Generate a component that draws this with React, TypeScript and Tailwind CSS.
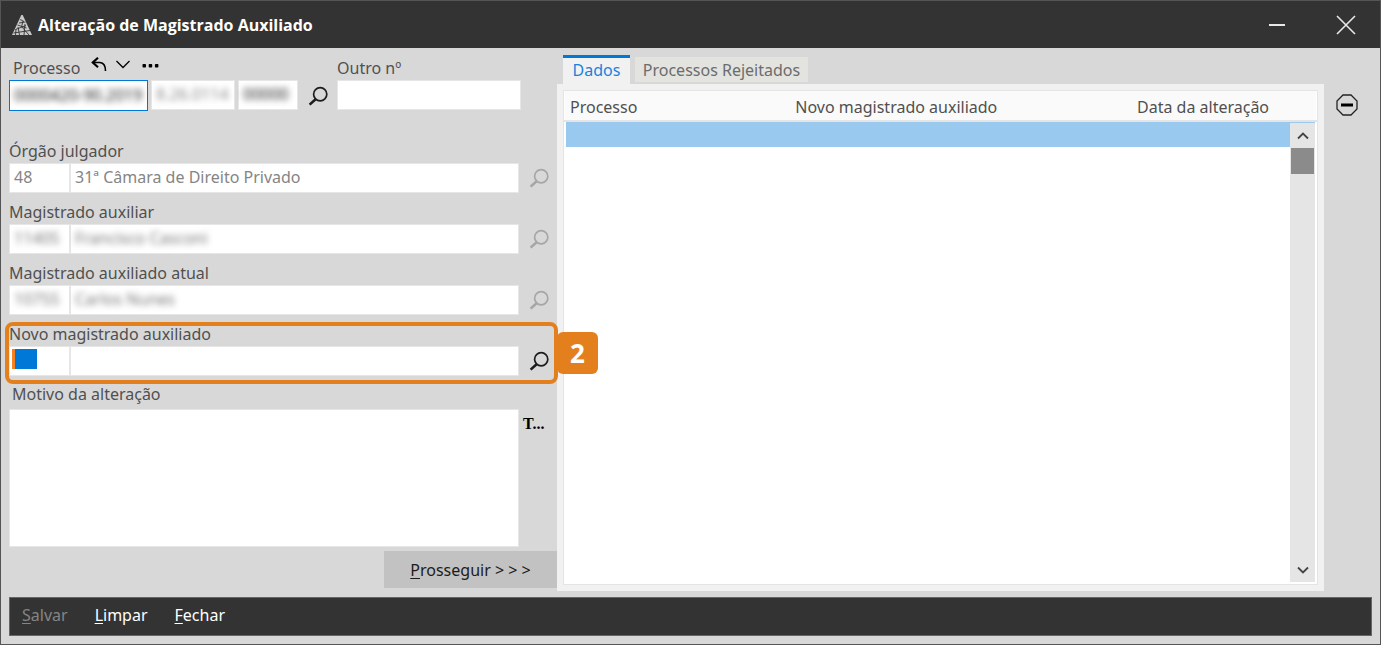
import type { ReactNode } from "react";

const fieldBox = "h-[30px] border border-[#e6e6e6] bg-white";
const fieldInput = "block h-full w-full bg-transparent px-1 pb-0.5 outline-none";

function SearchIcon() {
  return (
    <svg width="20" height="20" viewBox="0 0 20 20" fill="none" stroke="currentColor" aria-hidden="true">
      <circle cx="12.2" cy="8.3" r="6.6" strokeWidth="1.7" />
      <path d="M7.6 13.2 L1.6 18.6" strokeWidth="2.6" />
    </svg>
  );
}

function SearchButton({ label, disabled = false }: { label: string; disabled?: boolean }) {
  return (
    <button
      type="button"
      aria-label={label}
      disabled={disabled}
      className="flex h-[30px] w-[38px] items-center justify-center pl-0.5 text-[#1c1c1c] disabled:text-[#a6a6a6]"
    >
      <SearchIcon />
    </button>
  );
}

type LookupProps = {
  id: string;
  label: string;
  code?: string;
  name?: string;
  masked?: boolean;
  disabled?: boolean;
  children?: ReactNode;
};

function LookupField({ id, label, code = "", name = "", masked, disabled, children }: LookupProps) {
  const tone = masked ? "text-[#777777] blur-[3px]" : "text-[#858585]";
  return (
    <div className="relative">
      <label htmlFor={id} className="block h-5 leading-4">
        {label}
      </label>
      <div className="flex">
        <div className={`${fieldBox} w-[61px] shrink-0`}>
          <input id={id} defaultValue={code} readOnly={disabled} className={`${fieldInput} ${tone}`} />
        </div>
        <div className={`${fieldBox} min-w-0 flex-1`}>
          <input
            aria-label={`${label} - nome`}
            defaultValue={name}
            readOnly={disabled}
            className={`${fieldInput} ${tone}`}
          />
        </div>
        <SearchButton label={`Pesquisar ${label}`} disabled={disabled} />
      </div>
      {children}
    </div>
  );
}

function AppLogo() {
  return (
    <svg width="20" height="20" viewBox="0 0 20 20" aria-hidden="true">
      <path d="M9.3 0 L0 20 H20 L10.7 0 Z" fill="#c8c8c8" />
      <path
        d="M8 4.500 L12 6.500 M7 8 L13.500 7 M5.500 10 L14.500 13 M3.500 14.500 L14 10.500 M1.500 18 L18 15.500 M6 12 L7.500 20 M11 6 L9.500 12 M13 9 L12 20 M10 12 L17 20 M4 14 L3.500 20"
        stroke="#333333"
        strokeWidth="0.9"
        fill="none"
      />
    </svg>
  );
}

export default function App() {
  return (
    <div className="mr-px flex min-h-screen flex-col border border-[#555555] bg-[#d8d8d8] font-['Noto_Sans','Open_Sans',sans-serif] text-base text-[#505050]">
      <header className="flex h-[47px] items-center bg-[#333333] pl-[11px] text-white">
        <AppLogo />
        <h1 className="ml-1.5 flex-1 font-['Open_Sans',sans-serif] text-base font-bold">
          Alteração de Magistrado Auxiliado
        </h1>
        <button type="button" aria-label="Minimizar" className="flex h-full w-[69px] items-center justify-center">
          <svg width="16" height="20" viewBox="0 0 16 20" aria-hidden="true">
            <path d="M0 10 H16" stroke="#e8e8e8" strokeWidth="2" />
          </svg>
        </button>
        <button type="button" aria-label="Fechar janela" className="flex h-full w-[69px] items-center justify-center">
          <svg width="20" height="20" viewBox="0 0 20 20" aria-hidden="true">
            <path d="M1 1 L19 19 M19 1 L1 19" stroke="#e8e8e8" strokeWidth="1.6" />
          </svg>
        </button>
      </header>

      <main className="flex flex-1 flex-col px-2 pb-2">
        <div className="flex flex-1">
          <form className="flex w-[548px] shrink-0 flex-col pb-[9px]">
            <div className="flex">
              <div className="w-[289px]">
                <div className="flex h-8 items-center pl-1">
                  <label htmlFor="processo" className="pt-2">
                    Processo
                  </label>
                  <button type="button" aria-label="Desfazer" className="ml-[11px] text-black">
                    <svg width="16" height="15" viewBox="0 0 16 15" fill="none" stroke="currentColor" aria-hidden="true">
                      <path d="M1.500 5.500 H9 Q14.500 6 14.500 14" strokeWidth="1.6" />
                      <path d="M7 0.800 L1.800 5.500 L7 10.200" strokeWidth="2.2" />
                    </svg>
                  </button>
                  <button type="button" aria-label="Recentes" className="ml-[9px] text-black">
                    <svg width="14" height="9" viewBox="0 0 14 9" fill="none" stroke="currentColor" aria-hidden="true">
                      <path d="M0.500 1 L7 7.500 L13.500 1" strokeWidth="1.3" />
                    </svg>
                  </button>
                  <button type="button" aria-label="Mais opções" className="ml-3 pt-1 text-black">
                    <svg width="17" height="4" viewBox="0 0 17 4" fill="currentColor" aria-hidden="true">
                      <rect x="0.500" width="3.500" height="3.500" rx="0.800" />
                      <rect x="6.700" width="3.500" height="3.500" rx="0.800" />
                      <rect x="12.900" width="3.500" height="3.500" rx="0.800" />
                    </svg>
                  </button>
                </div>
                <div className="flex">
                  <div className="h-[31px] w-[139px] border border-[#0078d7] bg-white">
                    <input
                      id="processo"
                      defaultValue="0000420-90.2019"
                      className={`${fieldInput} text-[#222222] blur-[3px]`}
                    />
                  </div>
                  <div className={`${fieldBox} ml-[3px] w-[84px]`}>
                    <input
                      aria-label="Unidade"
                      defaultValue="8.26.0114"
                      readOnly
                      className={`${fieldInput} text-[#888888] blur-[3px]`}
                    />
                  </div>
                  <div className={`${fieldBox} ml-[3px] w-[60px]`}>
                    <input
                      aria-label="Complemento"
                      defaultValue="00000"
                      className={`${fieldInput} text-[#222222] blur-[3px]`}
                    />
                  </div>
                </div>
              </div>
              <div className="flex w-[39px] items-end">
                <SearchButton label="Pesquisar processo" />
              </div>
              <div className="w-[184px]">
                <label htmlFor="outro" className="flex h-8 items-center pt-2">
                  Outro nº
                </label>
                <div className={fieldBox}>
                  <input id="outro" className={fieldInput} />
                </div>
              </div>
            </div>

            <div className="mt-8 flex flex-col gap-[11px]">
              <LookupField id="orgao" label="Órgão julgador" code="48" name="31ª Câmara de Direito Privado" disabled />
              <LookupField id="auxiliar" label="Magistrado auxiliar" code="11405" name="Francisco Casconi" masked disabled />
              <LookupField id="atual" label="Magistrado auxiliado atual" code="10755" name="Carlos Nunes" masked disabled />
              <LookupField id="novo" label="Novo magistrado auxiliado">
                <span className="pointer-events-none absolute bottom-[7px] left-[3px] h-5 w-[25px] border-l-[3px] border-[#f58220] bg-[#0078d7]" />
                <span className="pointer-events-none absolute -top-1 -right-px -bottom-2 -left-1 rounded-lg border-4 border-[#e47f1d]" />
                <span className="absolute top-1.5 -right-[41px] z-10 flex h-[42px] w-[41px] items-center justify-center rounded-md bg-[#e47f1d] font-['Open_Sans',sans-serif] text-[26px] font-bold text-white">
                  2
                </span>
              </LookupField>
            </div>

            <label htmlFor="motivo" className="mt-[9px] mb-1 h-5 pl-[3px] leading-[18px]">
              Motivo da alteração
            </label>
            <div className="flex flex-1">
              <textarea
                id="motivo"
                className="min-h-[138px] w-[510px] resize-none border border-[#e6e6e6] bg-white px-1 outline-none"
              />
              <button
                type="button"
                aria-label="Textos padrão"
                className="h-[30px] self-start pl-1 font-['Liberation_Serif',serif] text-base font-bold text-black"
              >
                T...
              </button>
            </div>
            <button
              type="button"
              className="mt-1 h-[37px] w-[173px] self-end bg-[#c2c2c2] text-[#1c1c1c]"
            >
              <u className="underline-offset-2">P</u>rosseguir &gt; &gt; &gt;
            </button>
          </form>

          <section className="flex min-w-0 flex-1 flex-col pt-[7px] pb-1.5">
            <div role="tablist" className="flex h-[29px] items-start gap-[5px] pl-1.5">
              <button
                type="button"
                role="tab"
                aria-selected="true"
                className="h-[29px] w-[67px] border-t-[3px] border-[#0078d7] bg-[#f1f1f1] pb-1 text-[#1a82dc]"
              >
                Dados
              </button>
              <button
                type="button"
                role="tab"
                aria-selected="false"
                className="mt-0.5 h-[25px] w-[173px] bg-[#e3e3df] text-[#6c6c6c]"
              >
                Processos Rejeitados
              </button>
            </div>
            <div className="flex-1 bg-[#f1f1f1] p-1.5">
              <div className="relative h-full border border-[#e4e4e4] bg-white">
                <table className="w-full table-fixed border-collapse text-left">
                  <colgroup>
                    <col className="w-[30%]" />
                    <col className="w-[45.5%]" />
                    <col />
                  </colgroup>
                  <thead>
                    <tr className="h-[30px] border-b-2 border-[#e4e4e4] bg-[#fafafa]">
                      <th className="pt-0.5 pl-[5px] font-normal">Processo</th>
                      <th className="pt-0.5 pl-[5px] font-normal">Novo magistrado auxiliado</th>
                      <th className="pt-0.5 pl-[5px] font-normal">Data da alteração</th>
                    </tr>
                  </thead>
                  <tbody>
                    <tr className="h-[26px] border-x-2 border-white bg-[#99c9ef]">
                      <td />
                      <td />
                      <td />
                    </tr>
                  </tbody>
                </table>
                <div className="absolute top-8 right-0.5 bottom-0.5 flex w-[25px] flex-col items-center bg-[#e5e5e5]">
                  <button type="button" aria-label="Rolar para cima" className="flex h-[25px] items-center">
                    <svg width="12" height="8" viewBox="0 0 12 8" fill="none" stroke="#444444" aria-hidden="true">
                      <path d="M1 6.500 L6 1.500 L11 6.500" strokeWidth="1.8" />
                    </svg>
                  </button>
                  <div className="h-[26px] w-[23px] bg-[#8b8b8b]" />
                  <button type="button" aria-label="Rolar para baixo" className="mt-auto flex h-[25px] items-center">
                    <svg width="12" height="8" viewBox="0 0 12 8" fill="none" stroke="#444444" aria-hidden="true">
                      <path d="M1 1.500 L6 6.500 L11 1.500" strokeWidth="1.8" />
                    </svg>
                  </button>
                </div>
              </div>
            </div>
          </section>

          <aside className="w-12 pt-[46px] pl-3">
            <button type="button" aria-label="Remover" className="block">
              <svg width="22" height="22" viewBox="0 0 22 22" fill="none" stroke="#222222" aria-hidden="true">
                <path d="M7 1 H15 L21 7 V15 L15 21 H7 L1 15 V7 Z" strokeWidth="1.3" />
                <path d="M5 11 H17" strokeWidth="3" stroke="#000000" />
              </svg>
            </button>
          </aside>
        </div>

        <footer className="flex h-[39px] items-center gap-[27px] border border-[#666666] bg-[#333333] px-3 pb-1 text-white">
          <button type="button" disabled className="text-[#858585]">
            <u className="underline-offset-2">S</u>alvar
          </button>
          <button type="button">
            <u className="underline-offset-2">L</u>impar
          </button>
          <button type="button">
            <u className="underline-offset-2">F</u>echar
          </button>
        </footer>
      </main>
    </div>
  );
}
